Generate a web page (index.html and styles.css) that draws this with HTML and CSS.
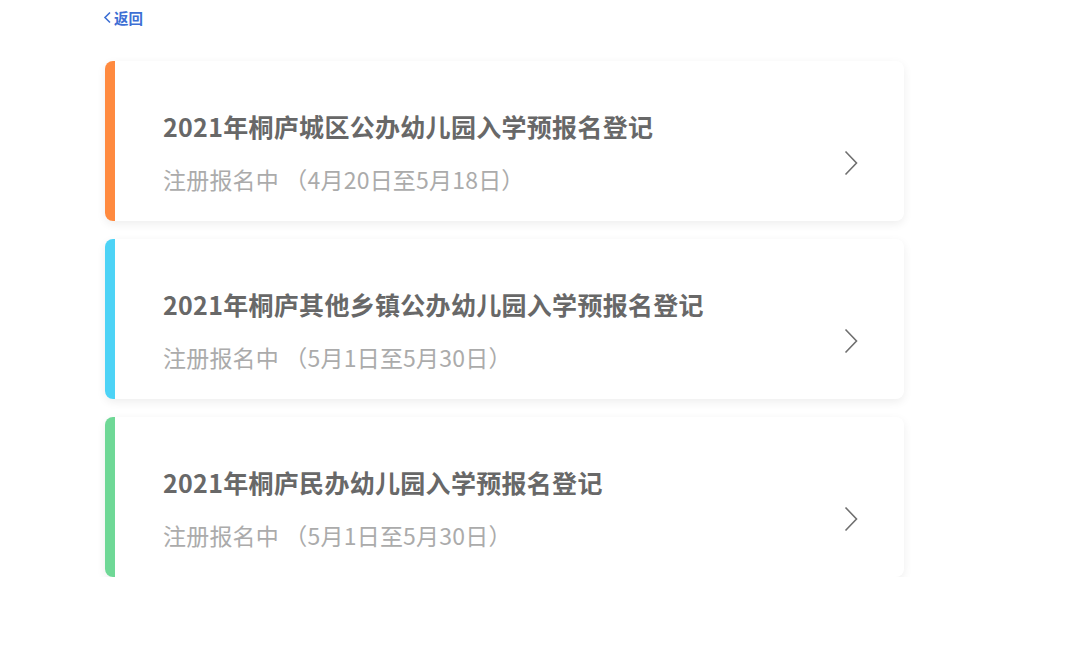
FILE: index.html
```html
<!DOCTYPE html>
<html lang="zh-CN">
<head>
  <meta charset="UTF-8">
  <title>预报名登记</title>
  <meta name="viewport" content="width=device-width, initial-scale=1">
  <link rel="stylesheet" href="styles.css">
</head>
<body>
  <div class="page">
    <a class="back" href="#">
      <svg class="back-icon" width="9" height="13" viewBox="0 0 9 13"><path d="M7 1.5 L2 6.5 L7 11.5" fill="none" stroke="currentColor" stroke-width="1.6"/></svg>
      返回
    </a>

    <div class="list">
      <div class="card">
        <div class="bar bar-orange"></div>
        <div class="card-body">
          <div class="title">2021年桐庐城区公办幼儿园入学预报名登记</div>
          <div class="sub">注册报名中 （4月20日至5月18日）</div>
        </div>
        <svg class="arrow" width="14" height="26" viewBox="0 0 14 26"><path d="M1.5 1.5 L12.5 13 L1.5 24.5" fill="none" stroke="#6f6f6f" stroke-width="1.6"/></svg>
      </div>

      <div class="card">
        <div class="bar bar-blue"></div>
        <div class="card-body">
          <div class="title">2021年桐庐其他乡镇公办幼儿园入学预报名登记</div>
          <div class="sub">注册报名中 （5月1日至5月30日）</div>
        </div>
        <svg class="arrow" width="14" height="26" viewBox="0 0 14 26"><path d="M1.5 1.5 L12.5 13 L1.5 24.5" fill="none" stroke="#6f6f6f" stroke-width="1.6"/></svg>
      </div>

      <div class="card">
        <div class="bar bar-green"></div>
        <div class="card-body">
          <div class="title">2021年桐庐民办幼儿园入学预报名登记</div>
          <div class="sub">注册报名中 （5月1日至5月30日）</div>
        </div>
        <svg class="arrow" width="14" height="26" viewBox="0 0 14 26"><path d="M1.5 1.5 L12.5 13 L1.5 24.5" fill="none" stroke="#6f6f6f" stroke-width="1.6"/></svg>
      </div>
    </div>
  </div>
</body>
</html>
```

FILE: styles.css
```css
html, body {
  margin: 0;
  padding: 0;
  background: #fff;
}
body {
  font-family: "Noto Sans CJK SC", "Noto Sans", sans-serif;
}
.page {
  width: 799px;
  margin-left: 105px;
  padding-top: 5px;
}
.back {
  display: inline-flex;
  align-items: center;
  gap: 2px;
  color: #3d6fd4;
  font-size: 14.5px;
  font-weight: 700;
  text-decoration: none;
  line-height: 20px;
  margin-left: -2px;
}
.back-icon {
  display: block;
}
.list {
  display: flex;
  flex-direction: column;
  gap: 18px;
  margin-top: 32px;
}
.card {
  display: flex;
  align-items: stretch;
  height: 160px;
  background: #fff;
  border-radius: 8px;
  overflow: hidden;
  box-shadow: 0 3px 10px rgba(0, 0, 0, 0.07);
}
.bar {
  width: 10px;
  flex: none;
}
.bar-orange { background: #ff8a3f; }
.bar-blue { background: #4dd3f6; }
.bar-green { background: #6fd896; }
.card-body {
  flex: 1;
  padding: 47px 0 0 48px;
}
.title {
  font-size: 25px;
  letter-spacing: 0.3px;
  font-weight: 700;
  color: #686868;
  line-height: 36px;
}
.sub {
  margin-top: 18px;
  font-size: 23px;
  letter-spacing: 0.2px;
  color: #ababab;
  line-height: 34px;
}
.arrow {
  flex: none;
  margin: 89px 46px 0 0;
}
```
